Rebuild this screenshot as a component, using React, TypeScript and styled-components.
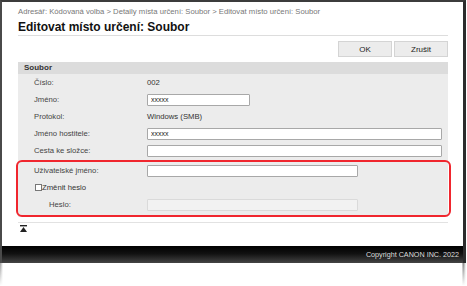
import React from "react";
import styled, { createGlobalStyle } from "styled-components";

const GlobalStyle = createGlobalStyle`
  body {
    margin: 0;
    background: #fff;
    font-family: "Liberation Sans", Arial, sans-serif;
  }
`;

type Field = {
  label: string;
  value?: string;
  input?: number;
  disabled?: boolean;
  indent?: number;
};

const fields: Field[] = [
  { label: "Číslo:", value: "002" },
  { label: "Jméno:", input: 103, value: "xxxxx" },
  { label: "Protokol:", value: "Windows (SMB)" },
  { label: "Jméno hostitele:", input: 295, value: "xxxxx" },
  { label: "Cesta ke složce:", input: 295, value: "" },
];

const TopIcon = () => (
  <svg width="7" height="7" viewBox="0 0 7 7">
    <rect x="0" y="0" width="7" height="1.4" fill="#222" />
    <polygon points="3.5,2 7,7 0,7" fill="#222" />
  </svg>
);

const renderRow = (f: Field) => (
  <Row key={f.label} $indent={f.indent ?? 0}>
    <Label>{f.label}</Label>
    {f.input ? (
      <TextInput $width={f.input} defaultValue={f.value} disabled={f.disabled} />
    ) : (
      <Value>{f.value}</Value>
    )}
  </Row>
);

export default function App() {
  return (
    <>
      <GlobalStyle />
      <Frame>
        <Main>
          <Breadcrumb>
            Adresář: Kódovaná volba &gt; Detaily místa určení: Soubor &gt; Editovat místo určení: Soubor
          </Breadcrumb>
          <Title>Editovat místo určení: Soubor</Title>
          <ButtonBar>
            <ActionButton>OK</ActionButton>
            <ActionButton>Zrušit</ActionButton>
          </ButtonBar>
          <SectionHeader>Soubor</SectionHeader>
          <Panel>
            {fields.map(renderRow)}
            <Highlight>
              {renderRow({ label: "Uživatelské jméno:", input: 211, value: "" })}
              <CheckRow>
                <CheckBox />
                <span>Změnit heslo</span>
              </CheckRow>
              {renderRow({ label: "Heslo:", input: 211, value: "", disabled: true, indent: 15 })}
            </Highlight>
          </Panel>
          <Divider />
          <TopLink>
            <TopIcon />
          </TopLink>
        </Main>
        <Footer>Copyright CANON INC. 2022</Footer>
      </Frame>
      <WindowTail />
    </>
  );
}

const Frame = styled.div`
  box-sizing: border-box;
  width: 466px;
  height: 263px;
  border-top: 2px solid #3c3c3c;
  border-left: 2px solid #4a4a4a;
  border-right: 3px solid #2c2c2c;
  display: flex;
  flex-direction: column;
  background: #fff;
`;

const Main = styled.div`
  flex: 1;
  padding: 5px 0 0 16px;
  width: 430px;
  display: flex;
  flex-direction: column;
`;

const Breadcrumb = styled.div`
  font-size: 7.7px;
  line-height: 10px;
  color: #777;
  white-space: nowrap;
`;

const Title = styled.h1`
  margin: 3px 0 0;
  font-size: 12px;
  line-height: 15px;
  font-weight: bold;
  color: #111;
  border-bottom: 1px solid #ddd;
`;

const ButtonBar = styled.div`
  display: flex;
  justify-content: flex-end;
  gap: 2px;
  margin-top: 5px;
`;

const ActionButton = styled.button`
  width: 54px;
  height: 16px;
  padding: 0;
  border: 1px solid #d4d4d4;
  background: #ececec;
  font-family: inherit;
  font-size: 8px;
  color: #222;
`;

const SectionHeader = styled.div`
  margin-top: 5px;
  height: 12px;
  line-height: 12px;
  padding-left: 6px;
  background: #dcdcdc;
  font-size: 8px;
  font-weight: bold;
  color: #333;
`;

const Panel = styled.div`
  background: #ececec;
  display: flex;
  flex-direction: column;
`;

const Row = styled.div<{ $indent: number }>`
  display: grid;
  grid-template-columns: ${(p) => 113 - p.$indent}px 1fr;
  align-items: center;
  height: 17px;
  padding-left: ${(p) => 16 + p.$indent}px;
`;

const Label = styled.span`
  font-size: 7.7px;
  color: #444;
`;

const Value = styled.span`
  font-size: 7.7px;
  color: #333;
`;

const TextInput = styled.input<{ $width: number }>`
  box-sizing: border-box;
  width: ${(p) => p.$width}px;
  height: 12px;
  padding: 0 3px;
  border: 1px solid #a8a8a8;
  border-radius: 1px;
  background: #fff;
  font-family: inherit;
  font-size: 7px;
  color: #222;

  &:disabled {
    background: #f2f2f2;
    border-color: #dadada;
  }
`;

const Highlight = styled.div`
  margin: 1px -3px 0 -2px;
  padding: 0 0 2px;
  border: 2px solid #f0262e;
  border-radius: 6px;
`;

const CheckRow = styled.label`
  display: flex;
  align-items: center;
  height: 17px;
  padding-left: 17px;
  font-size: 7.7px;
  color: #333;
`;

const CheckBox = styled.span`
  box-sizing: border-box;
  width: 7px;
  height: 7px;
  border: 1px solid #777;
  background: #fff;
`;

const Divider = styled.div`
  margin-top: 5px;
  height: 1px;
  background: #e2e2e2;
`;

const TopLink = styled.div`
  margin: 2px 0 0 2px;
  line-height: 0;
`;

const Footer = styled.div`
  height: 17px;
  line-height: 17px;
  padding-right: 4px;
  text-align: right;
  font-size: 7.2px;
  color: #ddd;
  background: linear-gradient(to bottom, #000 0%, #111 45%, #444 100%);
`;

const WindowTail = styled.div`
  width: 466px;
  height: 23px;
  background:
    linear-gradient(to bottom, rgba(255, 255, 255, 0) 0%, #fff 100%),
    linear-gradient(to right, #9a9a9a 0, #fff 3px, #fff 462px, #777 463px, #fff 466px);
`;
